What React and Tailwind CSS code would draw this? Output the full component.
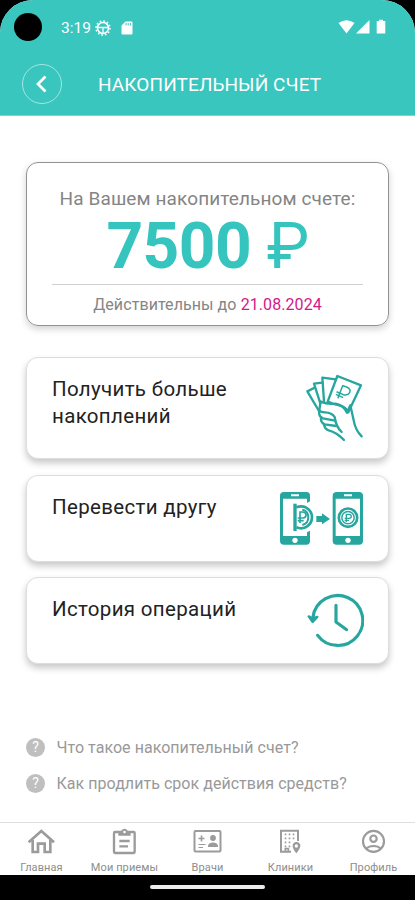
import React from 'react';

const HandIcon = () => (
	<svg
		className="w-[60px] h-[70px]"
		viewBox="45 69 180 210"
		fill="none"
		stroke="#26a69e"
		strokeWidth="7"
		strokeLinejoin="round"
		strokeLinecap="round"
	>
		<path d="M142 78L213 106L175 187Q168 170 145 165Q130 163 113 155Z" />
		<path d="M137 88L97 83L102 153" />
		<path d="M97 98L72 101L91 160" />
		<path d="M72 114L52 124L87 183" />
		<path d="M92 155Q112 164 137 161Q160 166 171 188L181 166L191 211Q196 240 215 259" />
		<path d="M92 155L88 180Q91 187 105 187Q126 188 134 201Q138 231 155 246" />
		<path d="M88 182Q84 198 99 205L135 212" />
		<path d="M93 203Q91 218 104 223L139 228" />
		<path d="M102 223Q104 237 116 241Q140 247 162 270" />
		<g strokeWidth="4.500">
			<path d="M144 143L158 107L170 111Q184 117 179 128Q173 138 160 134L141 126" />
			<path d="M139 134L158 142" />
		</g>
	</svg>
);

const PhonesIcon = () => (
	<svg
		className="w-[85px] h-[55px]"
		viewBox="42 48 255 165"
		fill="none"
		stroke="#26a69e"
	>
		<path
			fill="#26a69e"
			stroke="none"
			fillRule="evenodd"
			d="M57 51H124Q135 51 135 62V79L126 84V71H54V183H126V172L135 167V198Q135 209 124 209H57Q45 209 45 198V62Q45 51 57 51ZM78 58V64H102V58Z"
		/>
		<circle cx="90" cy="196" r="8" fill="#fff" stroke="none" />
		<path strokeWidth="10" d="M90 86V168" />
		<path strokeWidth="8" d="M94 97Q109 91 122 97Q141 107 141 127Q141 147 122 157Q109 163 94 157" />
		<path strokeWidth="6" d="M112 104Q130 108 130 127Q130 146 112 150" />
		<path
			strokeWidth="5"
			d="M105 144V111H114Q123 112 123 120Q123 129 114 129H98M98 137H116"
		/>
		<path
			fill="#26a69e"
			stroke="none"
			d="M154 123H171V115L195 132L171 148V141H154Z"
		/>
		<path
			fill="#26a69e"
			stroke="none"
			fillRule="evenodd"
			d="M215 51H282Q294 51 294 62V198Q294 209 282 209H215Q203 209 203 198V62Q203 51 215 51ZM237 58V64H261V58ZM212 71V183H285V71Z"
		/>
		<circle cx="249" cy="196" r="8" fill="#fff" stroke="none" />
		<circle cx="249" cy="128" r="27.500" strokeWidth="8" />
		<circle cx="249" cy="128" r="18.500" strokeWidth="4.500" />
		<path
			strokeWidth="4"
			d="M244 141V118H252Q259 119 259 124Q259 130 252 130H239M239 136H252"
		/>
	</svg>
);

const HistoryIcon = () => (
	<svg
		className="w-[58px] h-[55px]"
		viewBox="48 54 174 165"
		fill="none"
		stroke="#26a69e"
		strokeWidth="9.500"
		strokeLinecap="round"
		strokeLinejoin="round"
	>
		<path d="M69 126A75 75 0 1 1 83 181" />
		<path d="M138 91V141L170 164" />
		<path fill="#26a69e" strokeWidth="7" d="M56 124L67 130L82 126L68 141Z" />
	</svg>
);

const HomeIcon = () => (
	<svg
		className="w-[29px] h-[27px]"
		viewBox="81 39 87 81"
		fill="none"
		stroke="#9b9b9b"
		strokeWidth="8"
	>
		<path d="M86 82L124 48L162 82" />
		<path d="M98 75V111H114V86H134V111H151V75" />
	</svg>
);

const ClipboardIcon = () => (
	<svg
		className="w-[29px] h-[27px]"
		viewBox="330 39 87 81"
		fill="none"
		stroke="#9b9b9b"
	>
		<rect x="342" y="51" width="62" height="63" rx="3" strokeWidth="7" />
		<path fill="#9b9b9b" stroke="none" d="M355 50H363Q366 41 373.500 41T384 50H392V62H355Z" />
		<circle cx="373.500" cy="51" r="4" fill="#fff" stroke="none" />
		<path strokeWidth="7" d="M358 78H389M358 94H384" />
	</svg>
);

const DoctorsIcon = () => (
	<svg className="w-[29px] h-[27px]" viewBox="0 0 29 27" fill="none" stroke="#9b9b9b">
		<rect x="1.500" y="3" width="26" height="20.500" rx="1" strokeWidth="2" />
		<path strokeWidth="1.600" d="M8.500 7.500V13.500M5.500 10.500H11.500" />
		<path strokeWidth="1" d="M5.500 16.500H12.500M5.500 19.500H10" />
		<circle cx="20" cy="10" r="2.900" fill="#9b9b9b" stroke="none" />
		<path fill="#9b9b9b" stroke="none" d="M15 19V17.500Q16 14.500 20 14.500T25 17.500V19Z" />
	</svg>
);

const ClinicsIcon = () => (
	<svg
		className="w-[29px] h-[27px]"
		viewBox="208 39 87 81"
		fill="none"
		stroke="#9b9b9b"
	>
		<path strokeWidth="6" d="M253 110H223V47H274V78" />
		<path
			strokeWidth="5"
			strokeDasharray="5 7"
			d="M234 58H265M234 70H265M234 82H258M234 94H252"
		/>
		<path strokeWidth="5" d="M236 110V101H245V110" />
		<path
			fill="#9b9b9b"
			stroke="none"
			fillRule="evenodd"
			d="M269 81Q281 82 281 93Q280 102 269 115Q258 102 258 93Q258 82 269 81ZM269 88A5 5 0 1 0 269 98A5 5 0 1 0 269 88Z"
		/>
	</svg>
);

const ProfileIcon = () => (
	<svg
		className="w-[29px] h-[27px]"
		viewBox="456 39 87 81"
		fill="none"
		stroke="#9b9b9b"
		strokeWidth="6.500"
	>
		<circle cx="499.500" cy="79" r="31.500" />
		<circle cx="499.500" cy="71" r="9.500" />
		<path d="M477 101Q486 93 499.500 93T522 101" />
	</svg>
);

const actions = [
	{
		title: 'Получить больше накоплений',
		Icon: HandIcon,
		card: 'h-[102px] mb-4',
		icon: 'mt-[15px] mr-[23px]',
	},
	{
		title: 'Перевести другу',
		Icon: PhonesIcon,
		card: 'h-[87px] mb-[15px]',
		icon: 'mt-[15px] mr-[24px]',
	},
	{
		title: 'История операций',
		Icon: HistoryIcon,
		card: 'h-[87px]',
		icon: 'mt-[15px] mr-[24px]',
	},
];

const questions = [
	'Что такое накопительный счет?',
	'Как продлить срок действия средств?',
];

const tabs = [
	{ label: 'Главная', Icon: HomeIcon },
	{ label: 'Мои приемы', Icon: ClipboardIcon },
	{ label: 'Врачи', Icon: DoctorsIcon },
	{ label: 'Клиники', Icon: ClinicsIcon },
	{ label: 'Профиль', Icon: ProfileIcon },
];

const StatusBar = () => (
	<div className="h-[54px] flex items-center pl-[14px] pr-[29px]">
		<div className="size-7 rounded-full bg-black" />
		<span className="ml-[19px] w-[30px] mt-[3px] text-[15.500px] leading-none whitespace-nowrap">
			3:19
		</span>
		<svg className="ml-[4px] size-4 mt-px" viewBox="0 0 16 16" fill="none" stroke="#fff">
			<circle cx="8" cy="8" r="5.500" strokeWidth="1.500" />
			<circle cx="8" cy="8" r="7" strokeWidth="1.500" strokeDasharray="1.700 1.965" />
			<path strokeWidth="1.300" d="M3 7.500H13M8 7.500V13" />
		</svg>
		<svg className="ml-[10px] w-3 h-[14px] mt-px" viewBox="0 0 12 14">
			<path
				fill="#fff"
				fillRule="evenodd"
				d="M4.500 0.500H10.500Q11.500 0.500 11.500 1.500V12.500Q11.500 13.500 10.500 13.500H1.500Q0.500 13.500 0.500 12.500V4.500ZM4.500 2V4.500H5.500V2ZM6.700 2V4.500H7.700V2ZM8.900 2V4.500H9.900V2Z"
			/>
		</svg>
		<svg className="ml-auto w-12 h-4" viewBox="0 0 48 16" fill="#fff">
			<path d="M0.500 4Q8.500 -1.500 16.500 4L8.500 14.500Z" />
			<path d="M31.500 1V14.500H18Z" />
			<path d="M39 2H41V0.800H45V2H47.300V14.500H38.700V2Z" />
		</svg>
	</div>
);

function App() {
	return (
		<div className="h-[900px] w-[415px] overflow-hidden bg-black flex flex-col font-['Roboto',sans-serif]">
			<div className="h-[875px] bg-white rounded-t-[33px] overflow-hidden flex flex-col">
				<header className="h-[116px] shrink-0 bg-[#38c6bf] text-white border-b border-[#75d7d2]">
					<StatusBar />
					<div className="flex items-center pl-[22px] mt-[10px]">
						<button
							type="button"
							className="size-10 rounded-full border border-[#a5e5e1] flex items-center justify-center"
						>
							<svg className="w-3 h-[18px] mr-[2px]" viewBox="0 0 12 18" fill="none" stroke="#fff" strokeWidth="2.800">
								<path d="M10.500 1.500L3 9L10.500 16.500" />
							</svg>
						</button>
						<h1 className="ml-[36px] mt-px text-[19px] leading-none tracking-[0.1px] whitespace-nowrap">
							НАКОПИТЕЛЬНЫЙ СЧЕТ
						</h1>
					</div>
				</header>

				<main className="flex-1 px-[26px] pt-[46px]">
					<section className="w-[363px] h-[164px] rounded-xl border border-[#929292] shadow-[0_3px_7px_rgba(0,0,0,0.18)] px-[25px] flex flex-col items-center text-[#858585] whitespace-nowrap">
						<p className="mt-[24px] text-[19px] leading-6 tracking-[0.1px]">
							На Вашем накопительном счете:
						</p>
						<p className="mt-[4px] text-[64px] leading-[64px] tracking-[-0.5px] text-[#35c5be]">
							<span className="font-bold">7500</span> ₽
						</p>
						<hr className="w-full border-[#d0d0d0] mt-[5px]" />
						<p className="mt-[10px] text-[16px] leading-5 tracking-[0.08px]">
							Действительны до <span className="text-[#d3188b]">21.08.2024</span>
						</p>
					</section>

					<div className="mt-[31px]">
						{ actions.map( ( { title, Icon, card, icon } ) => (
							<button
								key={ title }
								type="button"
								className={ `${ card } w-[363px] rounded-xl border border-[#dddddd] bg-white shadow-[0_4px_7px_rgba(0,0,0,0.22)] flex items-start justify-between text-left pl-[25px]` }
							>
								<span className="mt-[18px] w-[190px] text-[20.500px] leading-[27px] tracking-[0.33px] text-[#222222]">
									{ title }
								</span>
								<span className={ icon }>
									<Icon />
								</span>
							</button>
						) ) }
					</div>

					<ul className="mt-[74px] flex flex-col gap-4">
						{ questions.map( ( question ) => (
							<li key={ question } className="h-5 flex items-center text-[16px] tracking-[0.04px] text-[#999999] whitespace-nowrap">
								<span className="size-[19px] -mt-[2px] rounded-full bg-[#bfbfbf] text-white text-[14px] leading-none flex items-center justify-center mr-[11.500px]">
									?
								</span>
								{ question }
							</li>
						) ) }
					</ul>
				</main>

				<nav className="h-[53px] shrink-0 border-t border-[#dfdfdf] grid grid-cols-5">
					{ tabs.map( ( { label, Icon } ) => (
						<div key={ label } className="flex flex-col items-center pt-[5px] text-[11px] leading-[13px] tracking-[0.1px] text-[#8d8d8d] whitespace-nowrap">
							<Icon />
							<span className="mt-[6px]">{ label }</span>
						</div>
					) ) }
				</nav>
			</div>
			<div className="mt-[10px] mx-auto w-[115px] h-1 rounded-full bg-[#ebebeb]" />
		</div>
	);
}

export default App;
